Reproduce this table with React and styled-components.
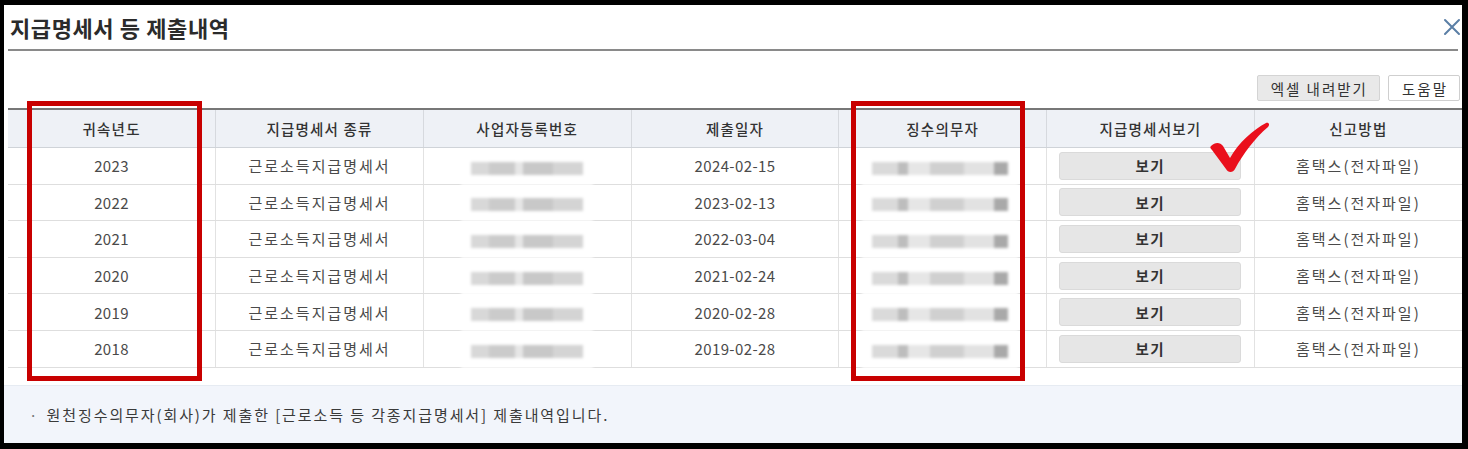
import React from "react";
import styled, { createGlobalStyle } from "styled-components";

const rows = [
  { year: "2023", date: "2024-02-15" },
  { year: "2022", date: "2023-02-13" },
  { year: "2021", date: "2022-03-04" },
  { year: "2020", date: "2021-02-24" },
  { year: "2019", date: "2020-02-28" },
  { year: "2018", date: "2019-02-28" },
];

const headers = ["귀속년도", "지급명세서 종류", "사업자등록번호", "제출일자", "징수의무자", "지급명세서보기", "신고방법"];

function App() {
  return (
    <>
      <GlobalStyle />
      <Frame>
        <Window>
          <TitleBar>
            <Title>지급명세서 등 제출내역</Title>
            <CloseButton aria-label="close">
              <svg width="20" height="20" viewBox="0 0 20 20">
                <path d="M3 3 L17 17 M17 3 L3 17" stroke="#5b7fa6" strokeWidth="2" strokeLinecap="round" />
              </svg>
            </CloseButton>
          </TitleBar>

          <Toolbar>
            <ToolButton $filled>엑셀 내려받기</ToolButton>
            <ToolButton>도움말</ToolButton>
          </Toolbar>

          <Table>
            <thead>
              <tr>
                {headers.map((h) => (
                  <Th key={h}>{h}</Th>
                ))}
              </tr>
            </thead>
            <tbody>
              {rows.map((r) => (
                <tr key={r.year}>
                  <Td $num>{r.year}</Td>
                  <Td>근로소득지급명세서</Td>
                  <Td>
                    <Blur $width={112}>
                      <Pix $shade="#d8d8d8" $w={18} />
                      <Pix $shade="#cbcbcb" $w={26} />
                      <Pix $shade="#e6e6e6" $w={8} />
                      <Pix $shade="#c8c8c8" $w={30} />
                      <Pix $shade="#d4d4d4" $w={30} />
                    </Blur>
                  </Td>
                  <Td $num>{r.date}</Td>
                  <Td>
                    <Blur $width={136} $shift={-5}>
                      <Pix $shade="#dadada" $w={26} />
                      <Pix $shade="#bdbdbd" $w={10} />
                      <Pix $shade="#e6e6e6" $w={22} />
                      <Pix $shade="#d0d0d0" $w={34} />
                      <Pix $shade="#e2e2e2" $w={30} />
                      <Pix $shade="#a9a9a9" $w={14} />
                    </Blur>
                  </Td>
                  <Td>
                    <ViewButton>보기</ViewButton>
                  </Td>
                  <Td>홈택스(전자파일)</Td>
                </tr>
              ))}
            </tbody>
          </Table>

          <Notice>
            <span>·</span> 원천징수의무자(회사)가 제출한 [근로소득 등 각종지급명세서] 제출내역입니다.
          </Notice>

          <Highlight $left={23} $width={175} />
          <Highlight $left={847} $width={174} />
          <Check viewBox="0 0 62 52" aria-hidden>
            <path
              d="M2 24 C6 20 11 20 14 24 L21 36 C30 20 44 8 57 1 C60 0 61 3 59 5 C46 16 34 32 26 47 C24 51 19 51 17 47 L3 28 C1 26 1 25 2 24 Z"
              fill="#ea0f1c"
            />
          </Check>
        </Window>
      </Frame>
    </>
  );
}

export default App;

const GlobalStyle = createGlobalStyle`
  html, body {
    margin: 0;
    padding: 0;
    background: #000;
  }
  body {
    font-family: "Noto Sans CJK KR", "Noto Sans", sans-serif;
  }
`;

const Frame = styled.div`
  width: 1468px;
  height: 449px;
  padding: 5px 6px 6px 4px;
  box-sizing: border-box;
  background: #000;
`;

const Window = styled.div`
  position: relative;
  width: 1458px;
  height: 438px;
  background: #fff;
  display: flex;
  flex-direction: column;
  overflow: hidden;
`;

const TitleBar = styled.div`
  height: 44px;
  margin: 0 4px 0 4px;
  border-bottom: 2px solid #8a8a8a;
  display: flex;
  align-items: center;
  justify-content: space-between;
`;

const Title = styled.h1`
  margin: 0 0 0 2px;
  font-size: 22px;
  font-weight: 700;
  color: #2b2b2b;
  letter-spacing: 0.6px;
`;

const CloseButton = styled.div`
  width: 20px;
  height: 20px;
  margin-top: 0;
  margin-right: -4px;
`;

const Toolbar = styled.div`
  display: flex;
  justify-content: flex-end;
  gap: 8px;
  margin-top: 24px;
  padding-right: 2px;
  height: 26px;
`;

const ToolButton = styled.div`
  height: 26px;
  box-sizing: border-box;
  padding: 0 11px 0 13px;
  display: flex;
  align-items: center;
  font-size: 14.5px;
  color: #333;
  letter-spacing: 2px;
  border: 1px solid ${(p) => (p.$filled ? "#d4d4d4" : "#cfcfcf")};
  background: ${(p) => (p.$filled ? "#e9e9e9" : "#fff")};
  border-radius: 2px;
`;

const Table = styled.table`
  margin: 7px 0 0 4px;
  width: 1454px;
  border-collapse: collapse;
  table-layout: fixed;
  border-top: 2px solid #777;
`;

const Th = styled.th`
  height: 37px;
  padding: 0;
  background: #eef1f6;
  font-size: 14.5px;
  font-weight: 500;
  color: #333;
  letter-spacing: 1.2px;
  border-left: 1px solid #d6d9de;
  border-bottom: 1px solid #cfd3d8;
  &:first-child {
    border-left: none;
  }
`;

const Td = styled.td`
  height: 35.6px;
  padding: 0;
  text-align: center;
  font-size: 15px;
  color: #4a4a4a;
  letter-spacing: ${(p) => (p.$num ? "0.4px" : "2px")};
  border-left: 1px solid #e2e2e2;
  border-bottom: 1px solid #dedede;
  &:first-child {
    border-left: none;
  }
`;

const Blur = styled.div`
  display: inline-flex;
  width: ${(p) => p.$width}px;
  height: 13px;
  margin-left: ${(p) => p.$shift || 0}px;
  filter: blur(1.6px);
  vertical-align: middle;
  box-shadow: 0 0 0 10px #fff;
`;

const Pix = styled.span`
  display: block;
  width: ${(p) => p.$w}px;
  height: 100%;
  background: ${(p) => p.$shade};
`;

const ViewButton = styled.div`
  margin: 0 auto;
  width: 182px;
  height: 28px;
  box-sizing: border-box;
  display: flex;
  align-items: center;
  justify-content: center;
  background: #e6e6e6;
  border: 1px solid #dadada;
  border-radius: 3px;
  font-size: 14.5px;
  font-weight: 700;
  color: #333;
  letter-spacing: 1.5px;
`;

const Notice = styled.div`
  margin-top: 17px;
  flex: 1;
  background: #f2f5fb;
  border-top: 1px solid #e6ebf2;
  display: flex;
  align-items: center;
  padding-left: 25px;
  font-size: 15px;
  color: #3a3a3a;
  letter-spacing: 1.9px;
  white-space: pre;

  span {
    color: #777;
    margin-right: 2px;
  }
`;

const Highlight = styled.div`
  position: absolute;
  top: 96px;
  left: ${(p) => p.$left}px;
  width: ${(p) => p.$width}px;
  height: 280px;
  box-sizing: border-box;
  border: 5px solid #c80000;
  pointer-events: none;
`;

const Check = styled.svg`
  position: absolute;
  left: 1205px;
  top: 117px;
  width: 62px;
  height: 52px;
`;
